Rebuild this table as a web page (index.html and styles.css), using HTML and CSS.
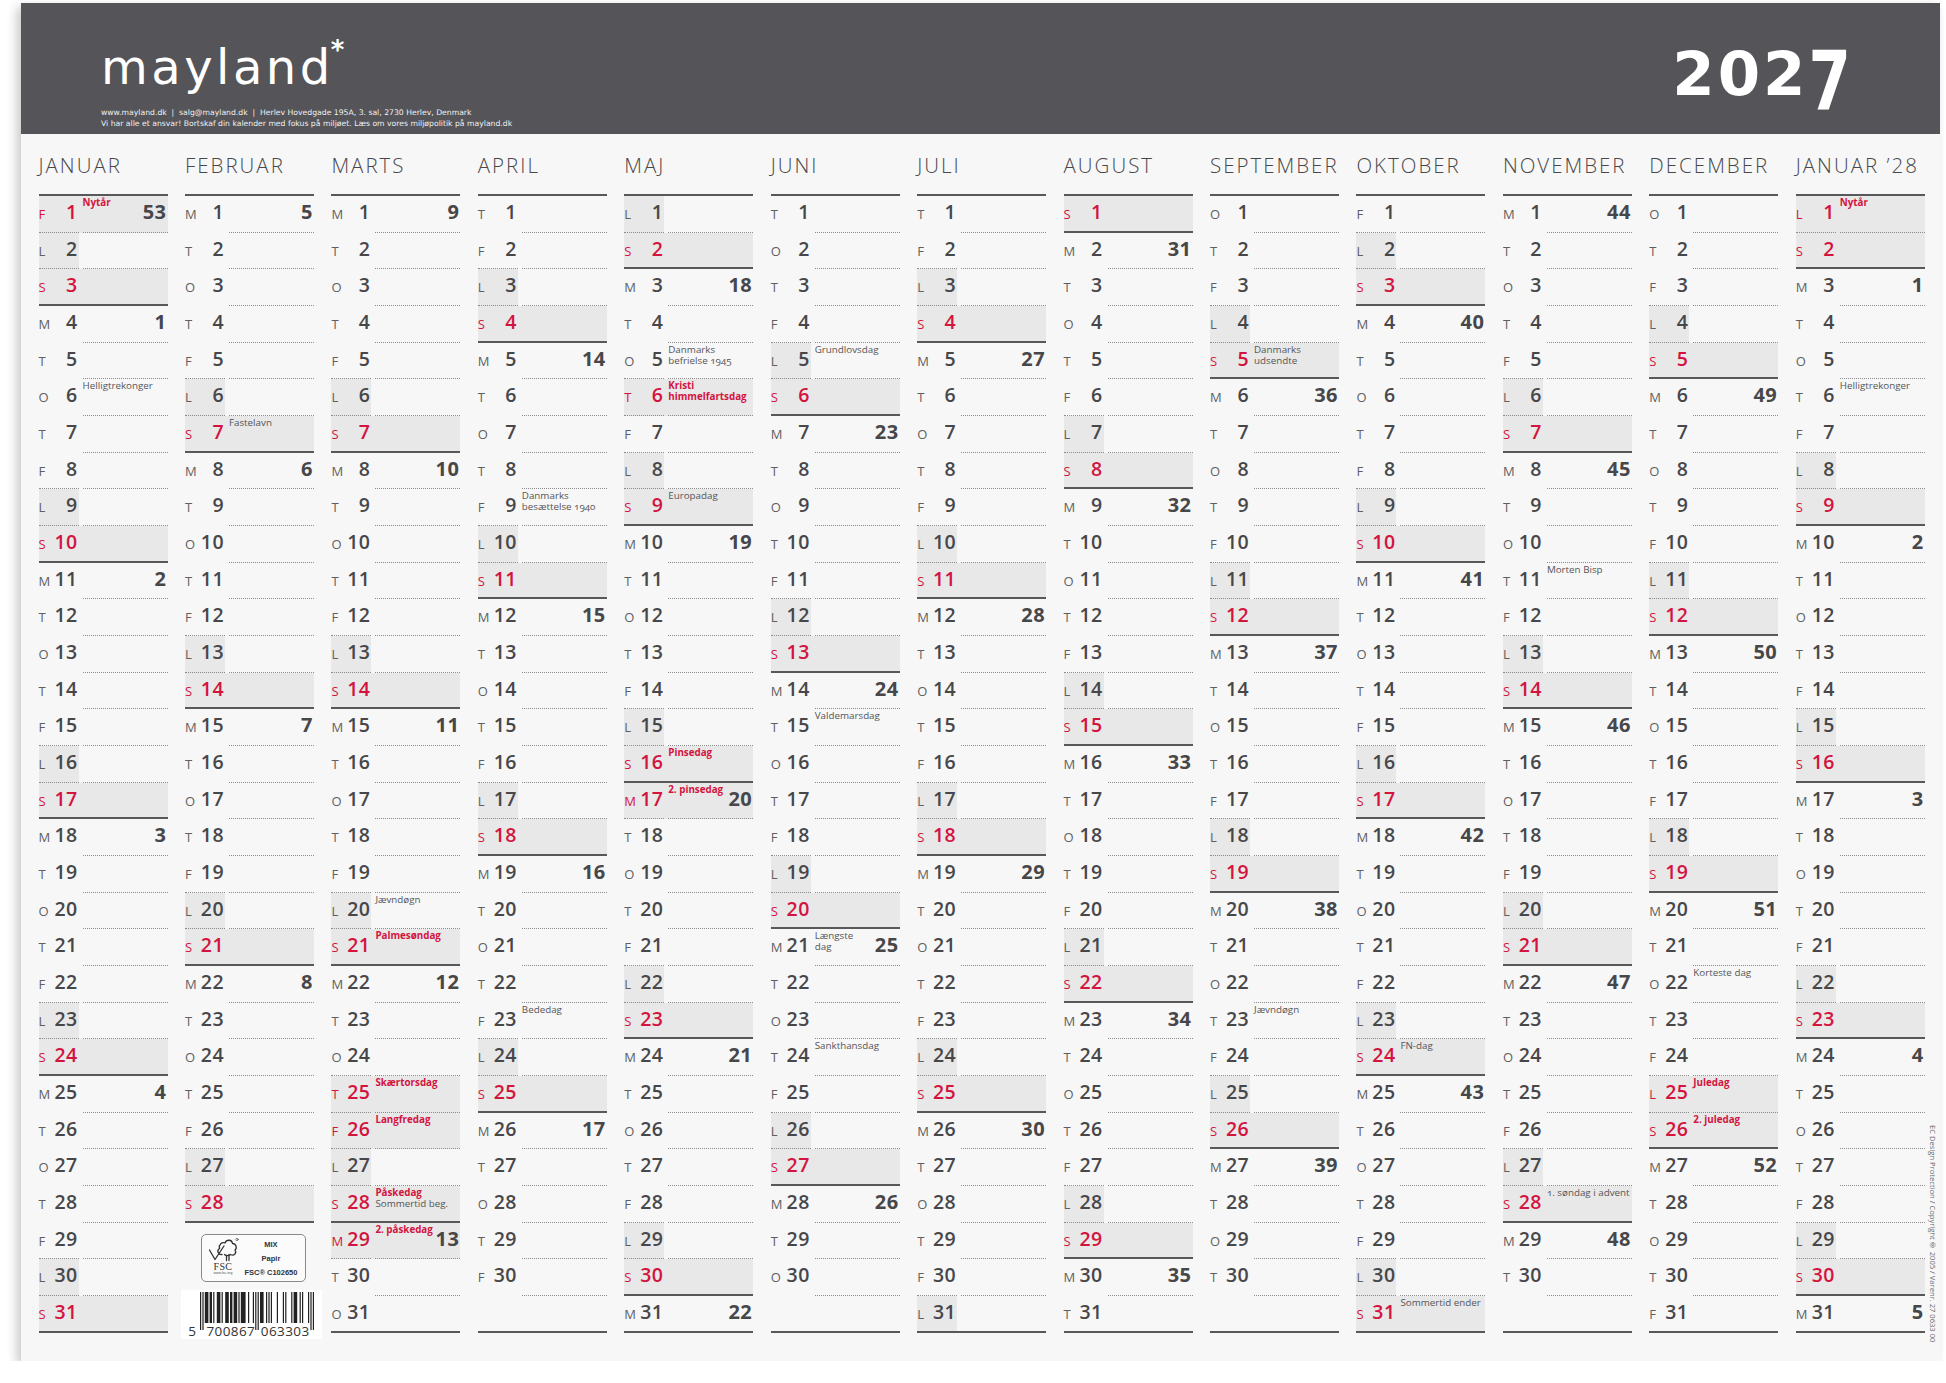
FILE: index.html
```html
<!DOCTYPE html>
<html lang="da">
<head>
<meta charset="utf-8">
<title>Mayland vægkalender 2027</title>
<link rel="stylesheet" href="styles.css">
</head>
<body>
<div class="paper">
  <header class="head">
    <div class="brand">
      <div class="logo">mayland<span class="ast">*</span></div>
      <div class="contact">www.mayland.dk &nbsp;|&nbsp; salg@mayland.dk &nbsp;|&nbsp; Herlev Hovedgade 195A, 3. sal, 2730 Herlev, Denmark<br>Vi har alle et ansvar! Bortskaf din kalender med fokus på miljøet. Læs om vores miljøpolitik på mayland.dk</div>
    </div>
    <div class="year">202<span class="seven">7</span></div>
  </header>
  <main class="cal">
    <div class="months" id="months"></div>
    <div class="copy">EC Design Protection / Copyright® 2005 / Varenr. 27 0633 00</div>
  </main>
</div>
<script src="script.js"></script>
</body>
</html>
```
FILE: styles.css
```css
html, body { margin: 0; padding: 0; background: #ffffff; }
body { font-family: "Open Sans", "Liberation Sans", sans-serif; }

.paper {
  margin: 3px 0 0 21px;
  width: 1919px;
  height: 1358px;
  background: #f7f7f7;
  box-shadow: -4px 4px 10px rgba(0, 0, 0, 0.22);
}

.head {
  height: 131px;
  background: #545459;
  display: flex;
  justify-content: space-between;
  align-items: flex-start;
  color: #ffffff;
}
.brand { padding: 38px 0 0 80px; }
.logo {
  font-family: "DejaVu Sans", sans-serif;
  font-size: 48px;
  line-height: 52px;
  letter-spacing: 3.5px;
  white-space: nowrap;
}
.ast {
  font-family: "DejaVu Sans", sans-serif;
  font-weight: 700;
  font-size: 26px;
  line-height: 1;
  vertical-align: top;
  position: relative;
  top: -4px;
  left: -3px;
}
.contact {
  font-family: "DejaVu Sans", sans-serif;
  font-size: 7.7px;
  line-height: 11px;
  margin-top: 14px;
  color: #f0f0f0;
  white-space: nowrap;
}
.year {
  font-family: "DejaVu Sans", sans-serif;
  font-weight: 700;
  font-size: 61px;
  line-height: 60px;
  letter-spacing: 3px;
  padding: 41px 86px 0 0;
}
.seven {
  display: inline-block;
  transform: scaleY(1.34);
  transform-origin: 50% 8px;
}

.cal {
  display: flex;
  padding-left: 17.5px;
}
.months {
  display: flex;
  gap: 17.45px;
}
.month { width: 129px; flex: none; }
.mname {
  margin: 0;
  height: 60px;
  box-sizing: border-box;
  padding-top: 21px;
  font-size: 20.5px;
  line-height: 20px;
  font-weight: 300;
  letter-spacing: 2px;
  color: #48484b;
  white-space: nowrap;
}
.days { border-top: 2px solid #58585b; }

.row {
  display: flex;
  height: 36.68px;
  box-sizing: border-box;
}
.row.solid { border-bottom: 2px solid #58585b; }
.row.full { background: #e8e8e8; }
.dc {
  width: 40px;
  flex: none;
  box-sizing: border-box;
  padding: 4px 1px 0 0;
  display: flex;
  justify-content: space-between;
  align-items: baseline;
  border-bottom: 1px dotted transparent;
}
.row.sat .dc { background: #e8e8e8; }
.row.ldot .dc { border-bottom-color: #8c8c8c; }
.info {
  flex: 1;
  min-width: 0;
  margin-left: 4px;
  display: flex;
  align-items: flex-start;
  border-bottom: 1px dotted #8c8c8c;
}
.row.solid .dc, .row.solid .info { border-bottom: 0; }

.wd { font-size: 13px; line-height: 24px; color: #5f5f62; }
.dn { font-size: 19.5px; line-height: 24px; font-weight: 600; letter-spacing: 0.4px; color: #47474a; }
.red .wd, .red .dn { color: #d3143f; }
.lbl {
  font-size: 9.8px;
  line-height: 11px;
  padding-top: 1px;
  white-space: nowrap;
}
.lr { color: #d3143f; font-weight: 700; }
.lg { color: #555558; font-variant-numeric: oldstyle-nums; }
.wk {
  margin-left: auto;
  padding: 4px 1px 0 0;
  font-size: 20px;
  line-height: 24px;
  font-weight: 700;
  letter-spacing: 0.5px;
  color: #47474a;
}

.extra { height: 110px; }
.fsc {
  margin: 11px 0 0 16px;
  width: 105px;
  height: 48px;
  box-sizing: border-box;
  border: 1px solid #8a8a8a;
  border-radius: 5px;
  background: #fbfbfb;
  display: flex;
  align-items: stretch;
  padding: 2px 3px 2px 4px;
}
.fsc-mark {
  width: 34px;
  display: flex;
  flex-direction: column;
  align-items: center;
}
.fsc-mark svg { display: block; }
.fsc-name {
  font-family: "Liberation Serif", serif;
  font-size: 10px;
  line-height: 9px;
  color: #333;
  letter-spacing: 0.3px;
}
.fsc-url {
  font-family: "Liberation Sans", sans-serif;
  font-size: 3.5px;
  line-height: 5px;
  color: #555;
}
.fsc-txt {
  flex: 1;
  display: flex;
  flex-direction: column;
  align-items: center;
  justify-content: space-between;
  padding: 3px 0 2px;
  font-family: "Liberation Sans", sans-serif;
  font-size: 7.5px;
  line-height: 9px;
  color: #333;
  font-weight: 700;
}
.barcode {
  margin: 8px 0 0 -4px;
  width: 141px;
  height: 49px;
  background: #ffffff;
}
.barcode svg { display: block; }

.copy {
  align-self: flex-end;
  writing-mode: vertical-rl;
  margin: 0 0 1px 3px;
  font-size: 7.6px;
  line-height: 9px;
  color: #6a6a6a;
  white-space: nowrap;
}
```
FILE: script.js
```js
(function () {
  var NAMES = ['JANUAR', 'FEBRUAR', 'MARTS', 'APRIL', 'MAJ', 'JUNI', 'JULI', 'AUGUST',
    'SEPTEMBER', 'OKTOBER', 'NOVEMBER', 'DECEMBER', 'JANUAR \u201928'];
  var WD = ['S', 'M', 'T', 'O', 'T', 'F', 'L'];
  var RED = {'0-1': 1, '2-25': 1, '2-26': 1, '2-29': 1, '4-6': 1, '4-17': 1, '11-25': 1, '12-1': 1};
  function r(t) { return '<span class="lr">' + t + '</span>'; }
  function g(t) { return '<span class="lg">' + t + '</span>'; }
  var LBL = {
    '0-1': r('Nytår'), '0-6': g('Helligtrekonger'), '1-7': g('Fastelavn'),
    '2-20': g('Jævndøgn'), '2-21': r('Palmesøndag'), '2-25': r('Skærtorsdag'),
    '2-26': r('Langfredag'), '2-28': r('Påskedag') + '<br>' + g('Sommertid beg.'),
    '2-29': r('2. påskedag'), '3-9': g('Danmarks<br>besættelse 1940'), '3-23': g('Bededag'),
    '4-5': g('Danmarks<br>befrielse 1945'), '4-6': r('Kristi<br>himmelfartsdag'),
    '4-9': g('Europadag'), '4-16': r('Pinsedag'), '4-17': r('2. pinsedag'),
    '5-5': g('Grundlovsdag'), '5-15': g('Valdemarsdag'), '5-21': g('Længste<br>dag'),
    '5-24': g('Sankthansdag'), '8-5': g('Danmarks<br>udsendte'), '8-23': g('Jævndøgn'),
    '9-24': g('FN-dag'), '9-31': g('Sommertid ender'), '10-11': g('Morten Bisp'),
    '10-28': g('1. søndag i advent'), '11-22': g('Korteste dag'), '11-25': r('Juledag'),
    '11-26': r('2. juledag'), '12-1': r('Nytår'), '12-6': g('Helligtrekonger')
  };

  function isoWeek(y, m, d) {
    var dt = new Date(Date.UTC(y, m, d));
    var day = dt.getUTCDay() || 7;
    dt.setUTCDate(dt.getUTCDate() + 4 - day);
    var y0 = new Date(Date.UTC(dt.getUTCFullYear(), 0, 1));
    return Math.ceil(((dt - y0) / 86400000 + 1) / 7);
  }

  /* EAN-13 barcode */
  var Lc = ['0001101', '0011001', '0010011', '0111101', '0100011', '0110001', '0101111', '0111011', '0110111', '0001011'];
  var Rc = Lc.map(function (s) { return s.split('').map(function (c) { return c === '0' ? '1' : '0'; }).join(''); });
  var Gc = Rc.map(function (s) { return s.split('').reverse().join(''); });
  var PAR = ['LLLLLL', 'LLGLGG', 'LLGGLG', 'LLGGGL', 'LGLLGG', 'LGGLLG', 'LGGGLL', 'LGLGLG', 'LGLGGL', 'LGGLGL'];
  function barcode(code) {
    var d = code.split('').map(Number);
    var bits = '101', p = PAR[d[0]], i;
    for (i = 1; i <= 6; i++) bits += (p[i - 1] === 'L' ? Lc : Gc)[d[i]];
    bits += '01010';
    for (i = 7; i <= 12; i++) bits += Rc[d[i]];
    bits += '101';
    var x0 = 19, mw = 1.2, out = '';
    function guard(k) { return k < 3 || (k >= 45 && k < 50) || k >= 92; }
    for (i = 0; i < bits.length; i++) {
      if (bits[i] === '1') {
        var j = i;
        while (j + 1 < bits.length && bits[j + 1] === '1' && guard(j + 1) === guard(i)) j++;
        var h = guard(i) ? 38 : 31;
        out += '<rect x="' + (x0 + i * mw).toFixed(2) + '" y="2" width="' + ((j - i + 1) * mw).toFixed(2) + '" height="' + h + '"/>';
        i = j;
      }
    }
    var txt = '<g font-family="Open Sans, Liberation Sans, sans-serif" font-size="13.5" fill="#333" text-anchor="middle">' +
      '<text x="11" y="46">' + code[0] + '</text>' +
      '<text x="' + (x0 + 24 * mw + 2) + '" y="46" letter-spacing="0.4">' + code.slice(1, 7) + '</text>' +
      '<text x="' + (x0 + 71 * mw) + '" y="46" letter-spacing="0.4">' + code.slice(7) + '</text></g>';
    return '<svg width="141" height="49" viewBox="0 0 141 49"><g fill="#222">' + out + '</g>' + txt + '</svg>';
  }

  var tree = '<svg width="32" height="25" viewBox="0 0 32 25" fill="none" stroke="#333" stroke-width="1.3" stroke-linejoin="round" stroke-linecap="round">' +
    '<path d="M15 17.5 C11 18 9.5 13.5 12.5 11.5 C11.5 7.5 15 4.5 18 6 C19.5 2 25 2.5 25.5 6.5 C29 6.5 30.5 11 28 13 C30 16 27 19.5 23.5 17.5 C22 19 19 19 17.5 17.5"/>' +
    '<path d="M2.5 13 L8 22.5 L17 9"/>' +
    '<path d="M19.5 18.5 L19.5 23.5 M22 17.5 L22 23.5"/>' +
    '<circle cx="30" cy="2.5" r="1.2" stroke-width="0.6"/></svg>';

  var EXTRA = '<div class="extra">' +
    '<div class="fsc"><div class="fsc-mark">' + tree + '<span class="fsc-name">FSC</span><span class="fsc-url">www.fsc.org</span></div>' +
    '<div class="fsc-txt"><span>MIX</span><span>Papir</span><span>FSC® C102650</span></div></div>' +
    '<div class="barcode">' + barcode('5700867063303') + '</div></div>';

  function shaded(row) { return row && !row.empty && (row.red || row.sat); }

  var html = '';
  for (var m = 0; m < 13; m++) {
    var y = m === 12 ? 2028 : 2027, mon = m % 12;
    var days = new Date(y, mon + 1, 0).getDate();
    var rows = [];
    for (var d = 1; d <= 31; d++) {
      if (d > days) {
        if (m === 1) break;
        rows.push({ empty: true });
        continue;
      }
      var wd = new Date(y, mon, d).getDay(), key = m + '-' + d;
      var red = wd === 0 || !!RED[key];
      var wk = '';
      if (wd === 1) wk = isoWeek(y, mon, d);
      if (m === 0 && d === 1) wk = 53;
      rows.push({ d: d, wd: wd, red: red, sat: wd === 6 && !red, label: LBL[key] || '', wk: wk });
    }
    var rh = '';
    for (var i = 0; i < rows.length; i++) {
      var rw = rows[i], cls = ['row'];
      var solid = rw.empty || rw.wd === 0 || i === rows.length - 1;
      if (rw.red) cls.push('full', 'red');
      if (rw.sat) cls.push('sat');
      if (solid) cls.push('solid');
      else if (shaded(rw) || shaded(rows[i + 1])) cls.push('ldot');
      if (rw.empty) {
        rh += '<div class="' + cls.join(' ') + '"><div class="dc"></div><div class="info"></div></div>';
      } else {
        rh += '<div class="' + cls.join(' ') + '"><div class="dc"><span class="wd">' + WD[rw.wd] +
          '</span><span class="dn">' + rw.d + '</span></div><div class="info">' +
          (rw.label ? '<span class="lbl">' + rw.label + '</span>' : '') +
          (rw.wk !== '' ? '<span class="wk">' + rw.wk + '</span>' : '') + '</div></div>';
      }
    }
    html += '<section class="month"><h2 class="mname">' + NAMES[m] + '</h2><div class="days">' + rh +
      (m === 1 ? EXTRA : '') + '</div></section>';
  }
  document.getElementById('months').innerHTML = html;
})();
```
